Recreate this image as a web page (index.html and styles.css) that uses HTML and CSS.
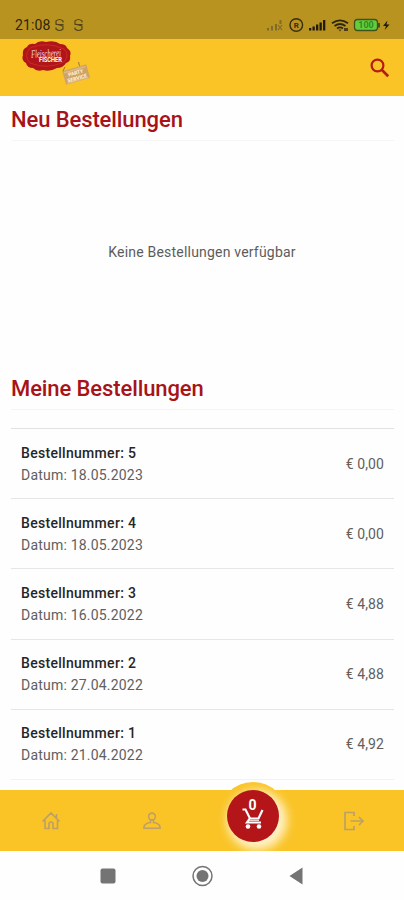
FILE: index.html
```html
<!DOCTYPE html>
<html lang="de">
<head>
    <meta charset="UTF-8">
    <meta name="viewport" content="width=device-width, initial-scale=1">
    <title>Bestellungen</title>
    <link rel="stylesheet" href="styles.css">
</head>
<body>
    <div class="app">
        <!-- Statusleiste -->
        <div class="statusbar">
            <div class="status-left">
                <span class="time">21:08</span>
                <svg class="status-note" width="30" height="14" viewBox="0 0 30 14" fill="none" stroke="#51451f" stroke-width="1.2">
                    <path d="M9 4.500V3q-3.500-3-7 0v3l7 2v3q-3.500 3-7 0V9.500M1.500 6.500h8" />
                    <path d="M28 4.500V3q-3.500-3-7 0v3l7 2v3q-3.500 3-7 0V9.500M20.500 6.500h8" />
                </svg>
            </div>
            <svg class="status-right" width="128" height="20" viewBox="0 0 128 20">
                <g fill="#806b28">
                    <rect x="3" y="13" width="2" height="2.500" />
                    <rect x="7" y="11" width="2" height="4.500" />
                    <rect x="11" y="9" width="2" height="6.500" />
                    <rect x="15.500" y="5" width="2" height="4" />
                    <path d="M14 10l4 5M18 10l-4 5" stroke="#806b28" stroke-width="1.200" />
                </g>
                <circle cx="32.300" cy="10" r="6.300" fill="none" stroke="#362d12" stroke-width="1.400" />
                <text class="status-letter" x="32.300" y="13" text-anchor="middle">R</text>
                <g fill="#211b0c">
                    <rect x="45" y="13" width="2.300" height="2.500" />
                    <rect x="48.500" y="11.500" width="2.300" height="4" />
                    <rect x="52" y="9.500" width="2.300" height="6" />
                    <rect x="55.500" y="7.500" width="2.300" height="8" />
                    <rect x="59" y="5" width="2.300" height="10.500" />
                </g>
                <g fill="none" stroke="#2d260f" stroke-width="1.800">
                    <path d="M68 8.300q8-6 16 0M70.500 11q5.500-4 11 0M73 13.400q3-2.200 6 0" />
                </g>
                <path d="M74.500 14.500h3L76 16.500zM80 13h4v3h-4z" fill="#4b3f19" />
                <rect x="90.500" y="4.500" width="23" height="11" rx="3" fill="#63ce3c" stroke="#42521c" stroke-width="1.300" />
                <path d="M115 8v4.500" stroke="#42521c" stroke-width="2" />
                <text class="battery" x="102" y="13" text-anchor="middle">100</text>
                <path d="M123.500 5.500l-4.500 5.500h3l-1.300 4 4.800-5.500h-3z" fill="#211b0c" />
            </svg>
        </div>

        <header class="header">
            <!-- Logo -->
            <svg class="logo" width="72" height="50" viewBox="0 0 72 50">
                <path d="M5 8q2-4 8-3 4-4 11-2 9-2 14 2 6 0 7 4 5 3 3 8 1 6-4 7-3 5-9 5-7 4-14 2-6 2-10-2-6 0-7-5-5-3-3-8-1-6 4-8z" fill="#b21519" />
                <path d="M8 9q17-7 34 1 6 6 0 13-17 8-34 1-7-7 0-15z" fill="none" stroke="#ca3028" stroke-width=".8" />
                <text class="logo-script" x="9" y="18" textLength="30" lengthAdjust="spacingAndGlyphs" transform="rotate(-3 25 16)">Fleischerei</text>
                <text class="logo-name" x="17" y="23" textLength="23" lengthAdjust="spacingAndGlyphs">FISCHER</text>
                <g transform="rotate(-16 54 35)">
                    <path d="M41.500 28.500h25v14h-25z" fill="#cfa367" />
                    <path d="M43 30.500h22M43 41.500h22" stroke="#dfba84" stroke-width="1.500" />
                    <text class="logo-tag" x="54" y="35.500" text-anchor="middle">PARTY</text>
                    <text class="logo-tag" x="54" y="41" text-anchor="middle">SERVICE</text>
                </g>
                <path d="M43 28l-2 4M56.500 23l1 4" stroke="#9f782d" stroke-width="1" />
            </svg>
            <svg class="search" width="20" height="20" viewBox="0 0 20 20" fill="none" stroke="#b51b12">
                <circle cx="7.500" cy="7.500" r="5.900" stroke-width="2.200" />
                <path d="M11.700 11.700l6.500 6.500" stroke-width="2.700" />
            </svg>
        </header>

        <main class="content">
            <section class="new-orders">
                <h2 class="title">Neu Bestellungen</h2>
                <p class="empty">Keine Bestellungen verfügbar</p>
            </section>

            <section class="my-orders">
                <h2 class="title">Meine Bestellungen</h2>
                <ul class="orders">
                    <li class="order">
                        <div>
                            <div class="number">Bestellnummer: 5</div>
                            <div class="date">Datum: 18.05.2023</div>
                        </div>
                        <div class="price">€ 0,00</div>
                    </li>
                    <li class="order">
                        <div>
                            <div class="number">Bestellnummer: 4</div>
                            <div class="date">Datum: 18.05.2023</div>
                        </div>
                        <div class="price">€ 0,00</div>
                    </li>
                    <li class="order">
                        <div>
                            <div class="number">Bestellnummer: 3</div>
                            <div class="date">Datum: 16.05.2022</div>
                        </div>
                        <div class="price">€ 4,88</div>
                    </li>
                    <li class="order">
                        <div>
                            <div class="number">Bestellnummer: 2</div>
                            <div class="date">Datum: 27.04.2022</div>
                        </div>
                        <div class="price">€ 4,88</div>
                    </li>
                    <li class="order">
                        <div>
                            <div class="number">Bestellnummer: 1</div>
                            <div class="date">Datum: 21.04.2022</div>
                        </div>
                        <div class="price">€ 4,92</div>
                    </li>
                </ul>
            </section>
        </main>

        <!-- Navigation -->
        <nav class="tabs">
            <a class="tab">
                <svg width="20" height="20" viewBox="0 0 20 20" fill="none" stroke="#bda066" stroke-width="1.600">
                    <path d="M1.500 10.500L10 2l8.500 8.500M4 8.500v9h4V12q2-2 4 0v5.500h4.500v-9M15.500 3v4" />
                </svg>
            </a>
            <a class="tab">
                <svg width="20" height="20" viewBox="0 0 20 20" fill="none" stroke="#bda066" stroke-width="1.600">
                    <circle cx="10" cy="5.500" r="3.400" />
                    <path d="M8.500 8.500v3Q2 12.500 2 16v1.300h16V16q0-3.500-6.500-4.500v-3" />
                </svg>
            </a>
            <a class="tab">
                <span class="cart">
                    <svg width="22" height="28" viewBox="0 0 22 28" fill="none" stroke="#fff" stroke-width="2.200">
                        <path d="M.5 7.500h3l4.500 9h8.500l4-8.500M8 16l-3 4.500h14" />
                        <path d="M7 18.300h10" stroke-width="1" />
                        <circle cx="6" cy="24.500" r="2.300" fill="#fff" stroke="none" />
                        <circle cx="17" cy="24.500" r="2.300" fill="#fff" stroke="none" />
                    </svg>
                    <span class="count">0</span>
                </span>
            </a>
            <a class="tab">
                <svg width="22" height="20" viewBox="0 0 22 20" fill="none" stroke="#bda066" stroke-width="1.700">
                    <path d="M11 5V1.500H2v17h9V15M7.500 10H20M16 6l4 4-4 4" />
                </svg>
            </a>
        </nav>

        <div class="sysnav">
            <svg width="16" height="16" viewBox="0 0 16 16"><rect x=".5" y=".5" width="15" height="15" rx="2" fill="#747474" /></svg>
            <svg width="22" height="22" viewBox="0 0 22 22">
                <circle cx="10.500" cy="11" r="9.500" fill="none" stroke="#747474" stroke-width="1.500" />
                <circle cx="10.500" cy="11" r="6" fill="#747474" />
            </svg>
            <svg width="14" height="18" viewBox="0 0 14 18"><path d="M.5 9L13.500.5v17z" fill="#747474" /></svg>
        </div>
    </div>
</body>
</html>
```

FILE: styles.css
```css
*{
    box-sizing: border-box;
}

body{
    margin: 0;
    font-family: Roboto, "Liberation Sans", sans-serif;
    background-color: #fefefe;
}

.app{
    width: 404px;
    height: 900px;
    display: flex;
    flex-direction: column;
    overflow: hidden;
}

.statusbar{
    height: 39px;
    flex: none;
    padding: 10px 12px 0 15px;
    display: flex;
    justify-content: space-between;
    background-color: #b99320;
}

.status-left{
    display: flex;
    align-items: center;
    height: 29px;
}

.time{
    font-size: 14px;
    letter-spacing: 0.1px;
    color: #2d250f;
}

.status-note{
    margin-left: 4px;
}

.status-right{
    margin-top: 5px;
}

.status-letter{
    font-size: 8px;
    font-weight: bold;
    fill: #362d12;
}

.battery{
    font-size: 9px;
    font-weight: bold;
    fill: #2e8a24;
}

.header{
    height: 57px;
    flex: none;
    padding: 0 14px 0 22px;
    display: flex;
    justify-content: space-between;
    align-items: center;
    background-color: #fac427;
}

.logo{
    margin-bottom: 7px;
}

.search{
    margin-top: 1px;
}

.logo-script{
    font-family: "Liberation Serif", serif;
    font-style: italic;
    font-size: 11px;
    fill: #f6dddd;
}

.logo-name{
    font-size: 6.500px;
    font-weight: bold;
    fill: #fff;
}

.logo-tag{
    font-size: 5px;
    font-weight: bold;
    fill: #fff4dd;
}

.content{
    flex: 1;
    min-height: 0;
    padding: 0 10px 0 11px;
    overflow: hidden;
}

.new-orders{
    height: 269px;
}

.title{
    height: 45px;
    margin: 0;
    padding-top: 10px;
    border-bottom: 1px solid #f5f5f5;
    font-size: 22px;
    line-height: 28px;
    font-weight: 500;
    letter-spacing: -0.1px;
    color: #a71317;
}

.empty{
    margin: 100px 0 0;
    padding-right: 1px;
    text-align: center;
    font-size: 14px;
    line-height: 22px;
    letter-spacing: 0.2px;
    color: #5c5c5c;
}

.orders{
    list-style: none;
    margin: 18px 0 0;
    padding: 0;
    border-top: 1px solid #e2e2e2;
}

.order{
    height: 70.200px;
    padding: 0 10px;
    border-bottom: 1px solid #e6e6e6;
    display: flex;
    justify-content: space-between;
    align-items: center;
    font-size: 14px;
    line-height: 22px;
    color: #606060;
}

.order:last-child{
    border-bottom-color: #f3f3f3;
}

.number{
    font-weight: 500;
    letter-spacing: 0.3px;
    color: #262626;
}

.date{
    letter-spacing: 0.2px;
}

.price{
    letter-spacing: 0.1px;
}

.tabs{
    height: 61px;
    flex: none;
    display: grid;
    grid-template-columns: repeat(4, 1fr);
    background-color: #fac427;
}

.tab{
    display: flex;
    justify-content: center;
    align-items: center;
}

.cart{
    position: relative;
    width: 52px;
    height: 52px;
    margin-top: -10px;
    display: flex;
    justify-content: center;
    align-items: center;
    border-radius: 50%;
    background-color: #b41519;
    box-shadow: 4px 4px 10px 4px #fff2c8, 0 0 0 8px #fac427;
}

.count{
    position: absolute;
    top: 7px;
    left: 0;
    width: 100%;
    text-align: center;
    font-size: 14px;
    line-height: 16px;
    font-weight: bold;
    color: #fff;
}

.sysnav{
    position: relative;
    height: 49px;
    flex: none;
    display: flex;
    justify-content: space-between;
    align-items: center;
    padding: 0 101px 0 100px;
    background-color: #fefefe;
}
```
